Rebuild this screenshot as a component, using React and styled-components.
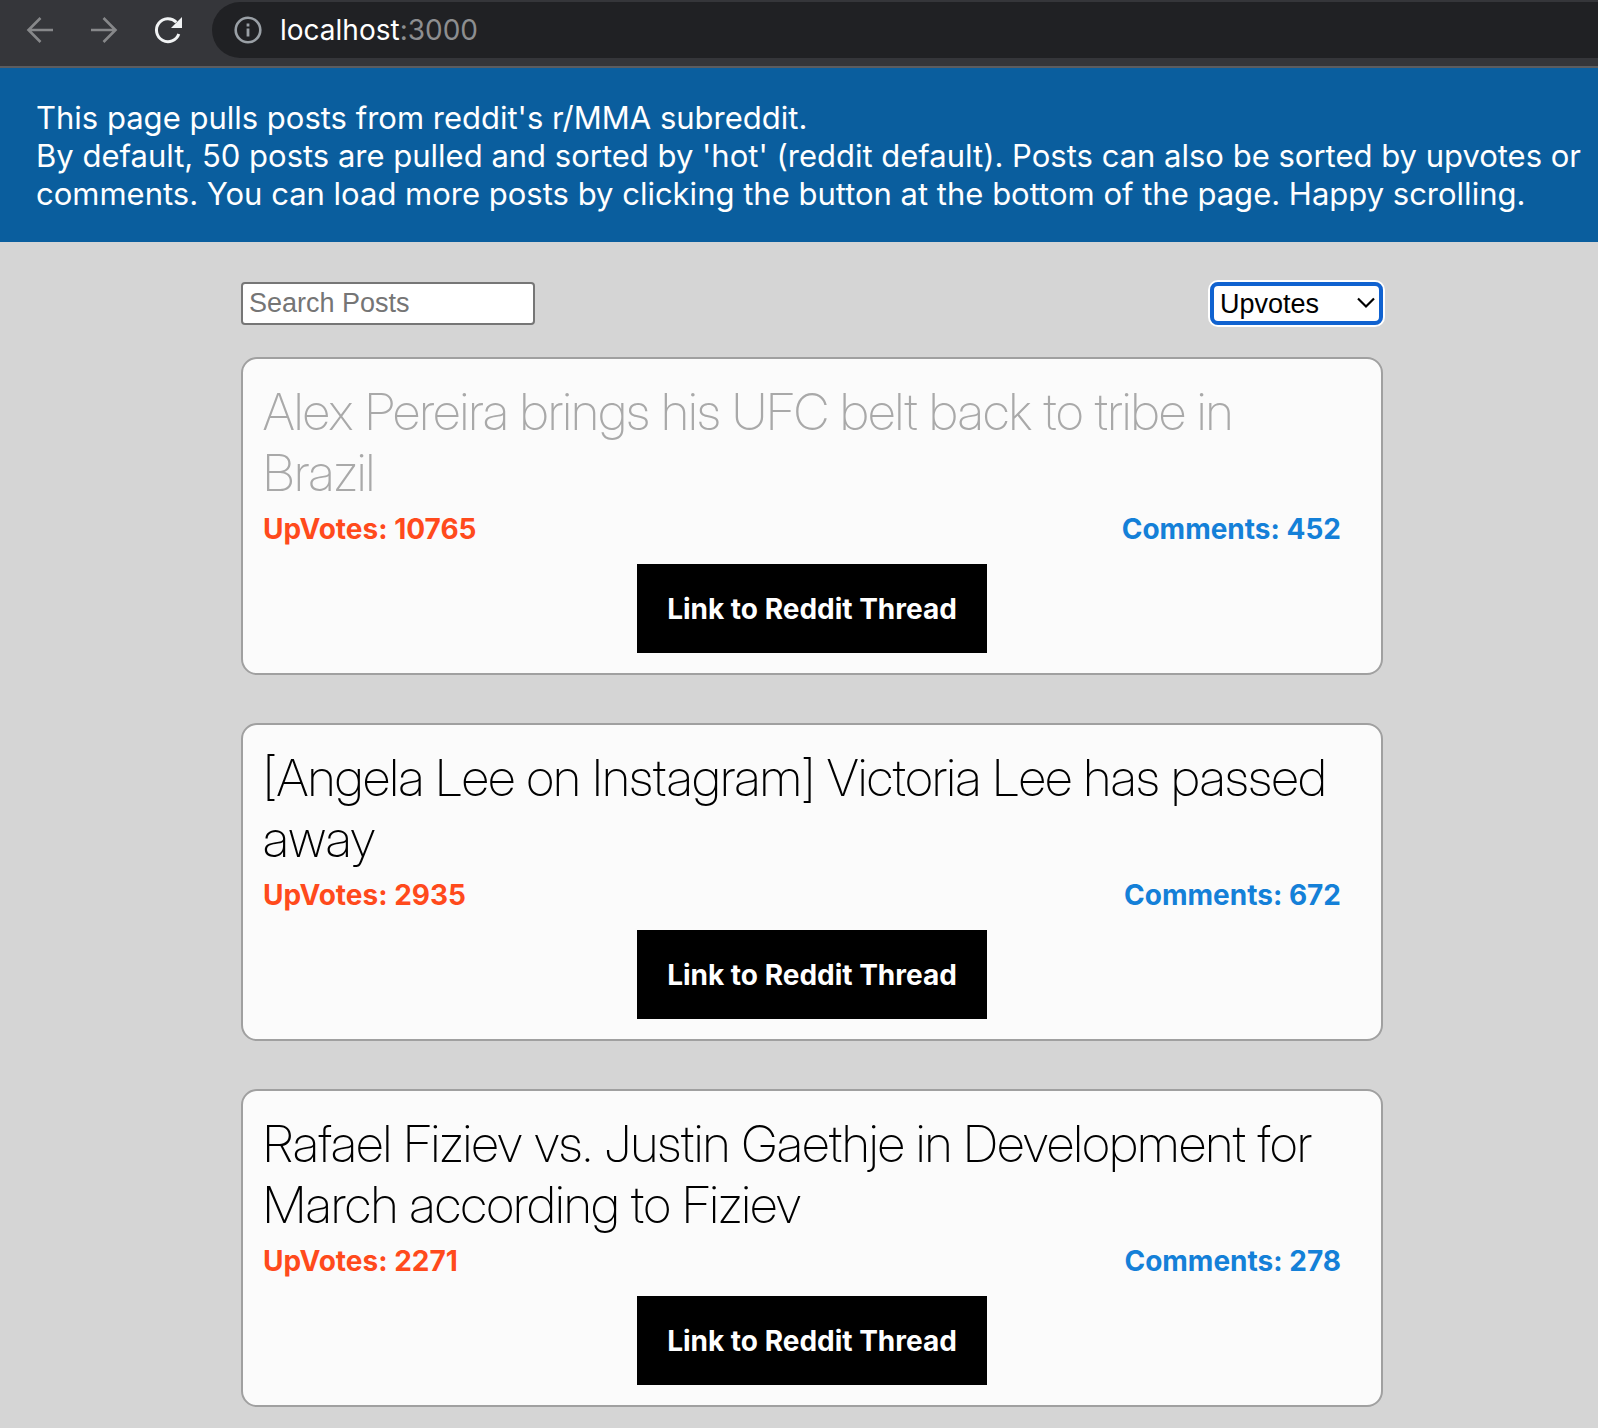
import React, { useState } from "react";
import styled, { createGlobalStyle } from "styled-components";

const GlobalStyle = createGlobalStyle`
  *, *::before, *::after { box-sizing: border-box; }
  html { background: #d5d5d5; }
  body {
    margin: 0;
    font-family: Inter, "Liberation Sans", sans-serif;
    color: #000;
  }
`;

const Toolbar = styled.header`
  display: flex;
  height: 68px;
  padding: 2px 0 8px 24px;
  background: #35363a;
  border-bottom: 2px solid #5c5d60;
`;

const NavButton = styled.button`
  display: flex;
  align-items: center;
  justify-content: center;
  width: 32px;
  margin-right: 32px;
  padding: 0;
  border: 0;
  background: none;
  color: ${(p) => (p.$active ? "#f1f3f4" : "#87888a")};
`;

const AddressBar = styled.div`
  flex: 1;
  display: flex;
  align-items: center;
  gap: 18px;
  margin-left: -4px;
  padding-left: 22px;
  border-radius: 28px 0 0 28px;
  background: #202124;
  color: #9aa0a6;
`;

const Address = styled.span`
  font-size: 28px;
  line-height: 34px;
  color: #8d8e90;
`;

const Host = styled.span`
  color: #fff;
`;

const Banner = styled.section`
  padding: 31px 16px 29px 36px;
  background: #0a5e9e;
  color: #fff;
  font-size: 31px;
  line-height: 38px;
`;

const BannerText = styled.p`
  margin: 0;
`;

const Main = styled.main`
  padding: 40px 215px 20px 241px;
`;

const Controls = styled.form`
  display: flex;
  justify-content: space-between;
  margin-bottom: 32px;
`;

const SearchInput = styled.input`
  width: 294px;
  height: 43px;
  padding: 0 6px;
  border: 2px solid #767676;
  border-radius: 4px;
  background: #fff;
  font: 27px "Liberation Sans", sans-serif;
  &::placeholder { color: #757575; opacity: 1; }
`;

const SelectBox = styled.div`
  position: relative;
  width: 173px;
  height: 43px;
  border-radius: 8px;
  box-shadow: 0 0 0 2px #fff;
`;

const SortSelect = styled.select`
  appearance: none;
  width: 100%;
  height: 100%;
  padding: 0 6px;
  border: 4px solid #1062d0;
  border-radius: 8px;
  outline: 0;
  background: #fff;
  color: #000;
  font: 27px "Liberation Sans", sans-serif;
`;

const Chevron = styled.svg`
  position: absolute;
  right: 7px;
  top: 14px;
  pointer-events: none;
`;

const PostList = styled.div`
  display: flex;
  flex-direction: column;
  gap: 48px;
`;

const Card = styled.article`
  padding: 22px 20px 20px;
  border: 2px solid #a0a0a0;
  border-radius: 16px;
  background: #fbfbfb;
`;

const Title = styled.h2`
  margin: 0 0 9px;
  padding-right: 20px;
  font-family: "Inter Display", Inter, sans-serif;
  font-size: 51px;
  font-weight: 200;
  line-height: 61px;
  color: ${(p) => (p.$faded ? "#a9a9a9" : "#000")};
`;

const Stats = styled.div`
  display: flex;
  justify-content: space-between;
  margin-bottom: 18px;
  padding-right: 20px;
  font-size: 28px;
  font-weight: 700;
  line-height: 34px;
`;

const Upvotes = styled.span`
  color: #ff4a1c;
`;

const Comments = styled.span`
  color: #1480d8;
`;

const ThreadLink = styled.a`
  display: block;
  width: 350px;
  margin: 0 auto;
  padding: 28px 0 27px;
  background: #000;
  color: #fff;
  font-size: 28px;
  font-weight: 700;
  line-height: 34px;
  text-align: center;
  text-decoration: none;
`;

const posts = [
  { title: "Alex Pereira brings his UFC belt back to tribe in Brazil", ups: 10765, comments: 452, faded: true },
  { title: "[Angela Lee on Instagram] Victoria Lee has passed away", ups: 2935, comments: 672 },
  { title: "Rafael Fiziev vs. Justin Gaethje in Development for March according to Fiziev", ups: 2271, comments: 278 },
];

function Post({ post }) {
  return (
    <Card>
      <Title $faded={post.faded}>{post.title}</Title>
      <Stats>
        <Upvotes>UpVotes: {post.ups}</Upvotes>
        <Comments>Comments: {post.comments}</Comments>
      </Stats>
      <ThreadLink href="#thread">Link to Reddit Thread</ThreadLink>
    </Card>
  );
}

export default function App() {
  const [query, setQuery] = useState("");
  const [sort, setSort] = useState("upvotes");
  return (
    <>
      <GlobalStyle />
      <Toolbar>
        <NavButton aria-label="Back">
          <svg width="32" height="32" viewBox="0 0 32 32" fill="none" stroke="currentColor" strokeWidth="2.6">
            <path d="M29 16H4M16.5 4 4.500 16l12 12" />
          </svg>
        </NavButton>
        <NavButton aria-label="Forward">
          <svg width="32" height="32" viewBox="0 0 32 32" fill="none" stroke="currentColor" strokeWidth="2.6">
            <path d="M3 16h25M15.500 4 27.500 16l-12 12" />
          </svg>
        </NavButton>
        <NavButton aria-label="Reload" $active>
          <svg width="32" height="32" viewBox="0 0 32 32" fill="none">
            <path d="M26.800 20A11.500 11.500 0 1 1 24.300 8.200" stroke="currentColor" strokeWidth="3" />
            <path d="M30 3v11H19z" fill="currentColor" />
          </svg>
        </NavButton>
        <AddressBar>
          <svg width="28" height="28" viewBox="0 0 28 28" fill="none" stroke="currentColor">
            <circle cx="14" cy="14" r="12.300" strokeWidth="2.600" />
            <path d="M14 12.500v8M14 7.500v3" strokeWidth="2.800" />
          </svg>
          <Address><Host>localhost</Host>:3000</Address>
        </AddressBar>
      </Toolbar>
      <Banner>
        <BannerText>This page pulls posts from reddit's r/MMA subreddit.</BannerText>
        <BannerText>
          By default, 50 posts are pulled and sorted by 'hot' (reddit default). Posts can also be sorted by upvotes or
          comments. You can load more posts by clicking the button at the bottom of the page. Happy scrolling.
        </BannerText>
      </Banner>
      <Main>
        <Controls onSubmit={(e) => e.preventDefault()}>
          <SearchInput
            type="text"
            aria-label="Search Posts"
            placeholder="Search Posts"
            value={query}
            onChange={(e) => setQuery(e.target.value)}
          />
          <SelectBox>
            <SortSelect aria-label="Sort posts" value={sort} onChange={(e) => setSort(e.target.value)}>
              <option value="hot">Hot</option>
              <option value="upvotes">Upvotes</option>
              <option value="comments">Comments</option>
            </SortSelect>
            <Chevron width="20" height="14" viewBox="0 0 20 14" fill="none" stroke="#000" strokeWidth="2.200">
              <path d="M2 2.500 10 10.500 18 2.500" />
            </Chevron>
          </SelectBox>
        </Controls>
        <PostList>
          {posts.map((post) => (
            <Post key={post.title} post={post} />
          ))}
        </PostList>
      </Main>
    </>
  );
}
